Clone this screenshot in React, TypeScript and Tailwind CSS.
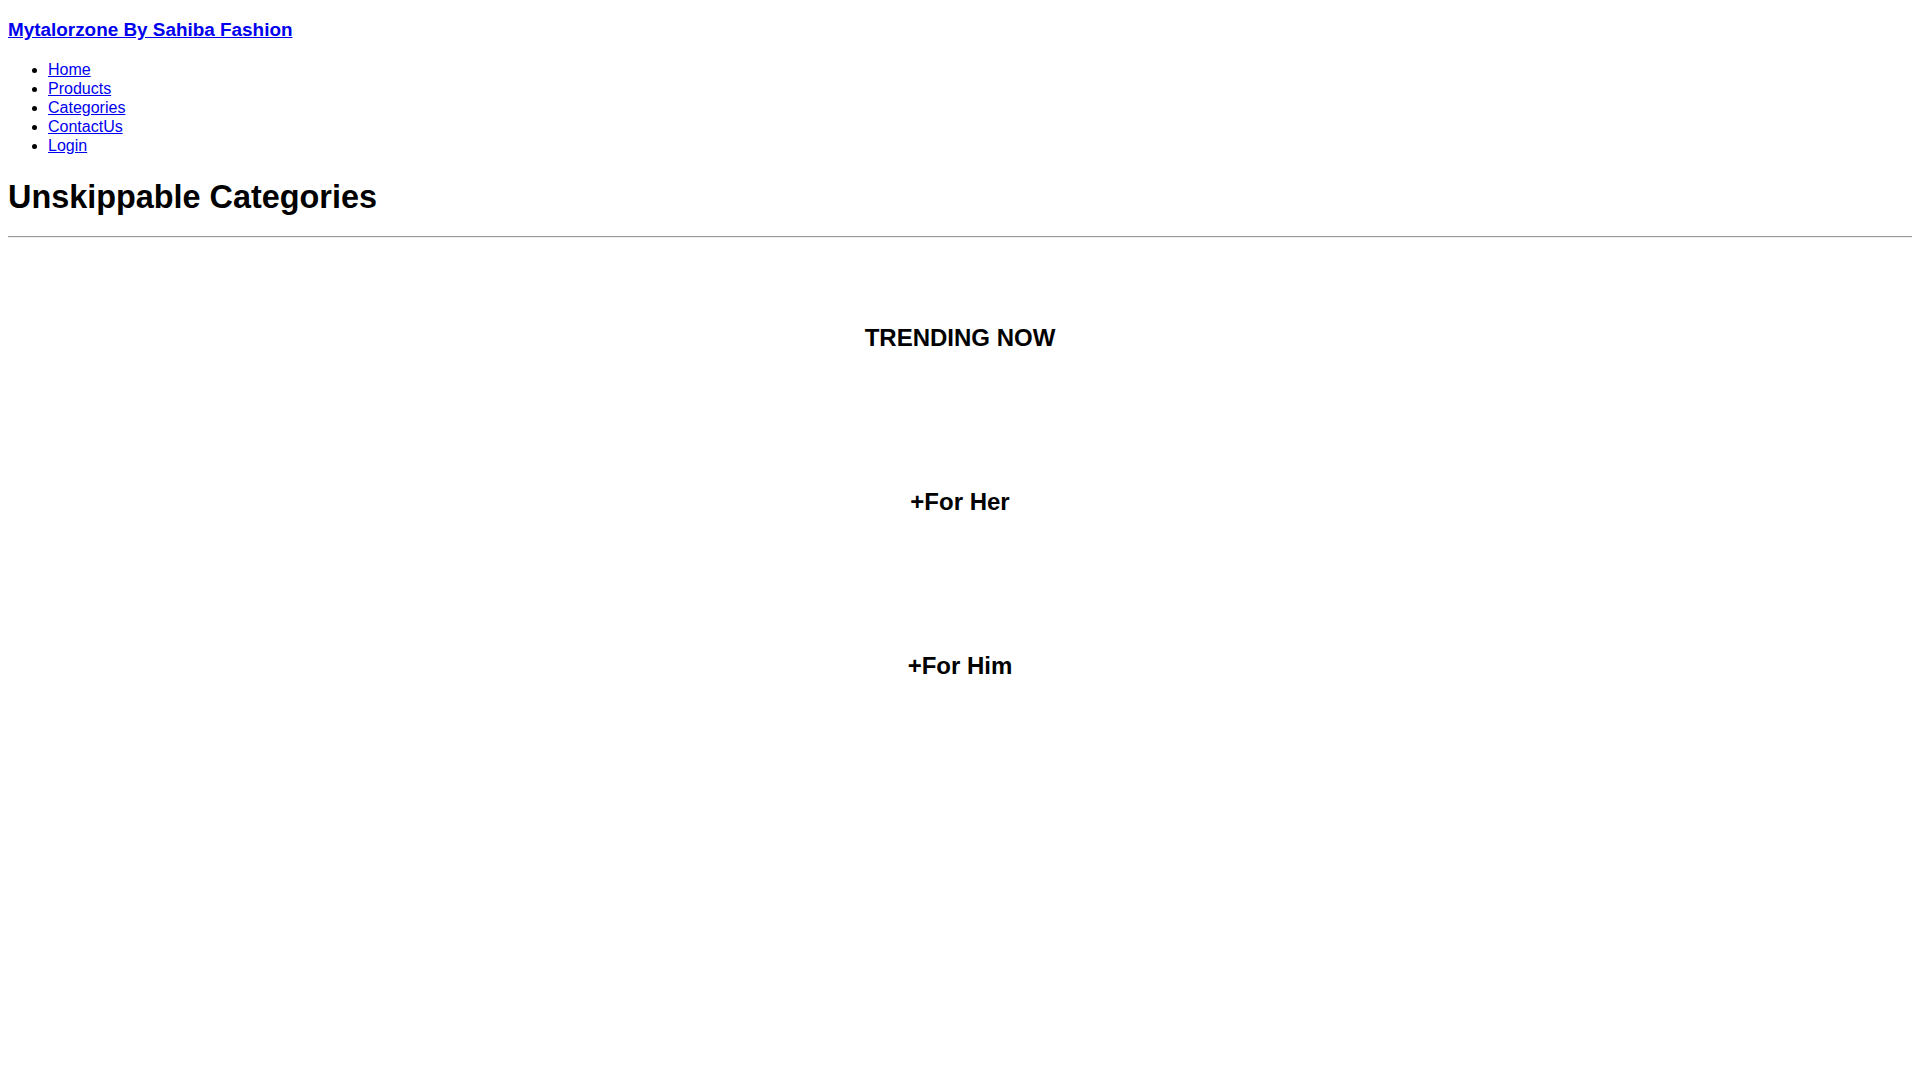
const navLinks = ["Home", "Products", "Categories", "ContactUs", "Login"];

const sections = ["+For Her", "+For Him"];

const App = () => {
  return (
    <div className="min-h-screen bg-white px-2 pb-2 font-['Liberation_Sans',Arial,sans-serif] text-black">
      {/* Header */}
      <h3 className="pt-[19px] mb-[18.72px] text-[18.9px] font-bold leading-[22px]">
        <a href="#" className="text-[#0000ee] underline">
          Mytalorzone By Sahiba Fashion
        </a>
      </h3>
      <ul className="mt-[17px] mb-4 list-disc pl-10 text-base leading-[19px]">
        {navLinks.map((link) => (
          <li key={link}>
            <a href="#" className="text-[#0000ee] underline">
              {link}
            </a>
          </li>
        ))}
      </ul>

      {/* Categories */}
      <h1 className="mt-[23px] text-[32.4px] font-bold leading-[38px]">Unskippable Categories</h1>
      <hr className="mt-[20px] border-t border-b border-t-[#9a9a9a] border-b-[#eeeeee]" />

      <h2 className="mt-[86px] text-center text-2xl font-bold leading-[normal]">TRENDING NOW</h2>
      {sections.map((s) => (
        <h2 key={s} className="mt-[136px] text-center text-2xl font-bold leading-[normal]">
          {s}
        </h2>
      ))}
    </div>
  );
};

export default App;
